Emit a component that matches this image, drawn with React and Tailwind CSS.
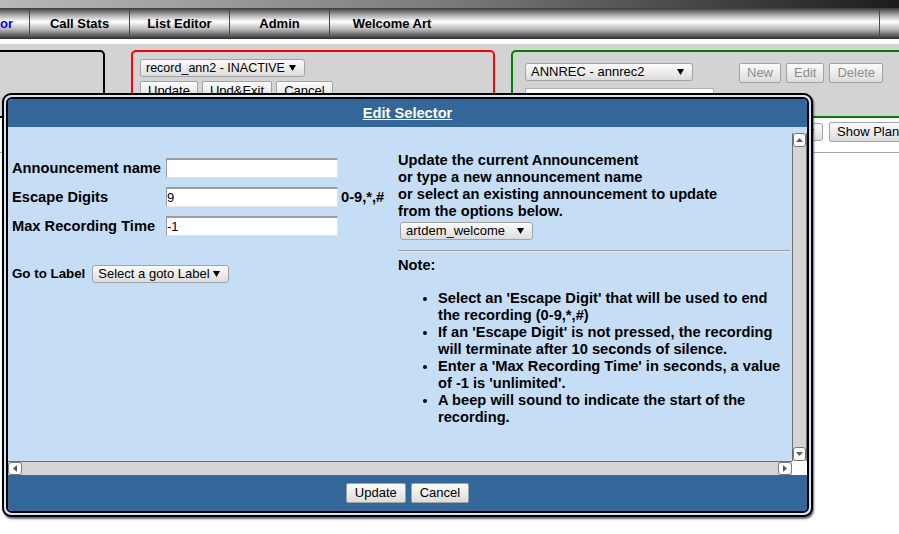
import React from 'react'

const GRAD = 'bg-[linear-gradient(#fcfcfc,#dcdcdc)]'

function Arrow() {
    return (
        <svg width="7" height="6" viewBox="0 0 7 6" className="shrink-0">
            <path d="M0 0h7L3.5 6z" fill="#000" />
        </svg>
    )
}

function FakeSelect({ label, width, size = 'text-[13px]' }) {
    return (
        <div className={`flex items-center justify-between h-[18px] pl-[5px] pr-[8px] border border-[#a3a3a3] rounded-[3px] ${GRAD} ${size} font-normal text-black leading-[16px] ${width}`}>
            <span className="whitespace-nowrap">{label}</span>
            <Arrow />
        </div>
    )
}

function Btn({ children, disabled, className = '' }) {
    return (
        <button
            type="button"
            className={`shrink-0 h-[20px] px-[7px] flex items-center border border-[#a3a3a3] rounded-[2px] ${GRAD} text-[13px] leading-[16px] whitespace-nowrap ${disabled ? 'text-[#8c8c8c]' : 'text-black'} ${className}`}
        >
            {children}
        </button>
    )
}

function Field({ value }) {
    return (
        <input
            readOnly
            value={value}
            className="w-[172px] h-[20px] shrink-0 bg-white border-solid border-t-2 border-l border-r border-b border-t-[#9c9c9c] border-l-[#9c9c9c] border-r-[#e2e2e2] border-b-[#e2e2e2] px-0 text-[13px] font-normal text-black outline-none"
        />
    )
}

function Row({ label, value, extra }) {
    return (
        <div className="flex items-center h-[20px]">
            <div className="w-[154px] shrink-0 whitespace-nowrap">{label}</div>
            <Field value={value} />
            {extra && <div className="ml-[3px] whitespace-nowrap">{extra}</div>}
        </div>
    )
}

function ScrollBox({ dir, className = '' }) {
    const paths = {
        up: 'M0 4L3.5 0L7 4z',
        down: 'M0 0h7L3.5 4z',
        left: 'M4 0v7L0 3.5z',
        right: 'M0 0v7L4 3.5z',
    }
    const vertical = dir === 'up' || dir === 'down'
    return (
        <div className={`bg-white border border-[#777] rounded-[3px] flex items-center justify-center ${className}`}>
            <svg width={vertical ? 7 : 4} height={vertical ? 4 : 7} viewBox={vertical ? '0 0 7 4' : '0 0 4 7'}>
                <path d={paths[dir]} fill="#5a5a5a" />
            </svg>
        </div>
    )
}

const NOTES = [
    "Select an 'Escape Digit' that will be used to end the recording (0-9,*,#)",
    "If an 'Escape Digit' is not pressed, the recording will terminate after 10 seconds of silence.",
    "Enter a 'Max Recording Time' in seconds, a value of -1 is 'unlimited'.",
    'A beep will sound to indicate the start of the recording.',
]

export default function App() {
    return (
        <div className="relative w-[899px] h-[534px] overflow-hidden bg-white font-['Liberation_Sans',Arial,sans-serif] text-black">
            {/* top strip + nav */}
            <div className="h-[8px] bg-[linear-gradient(to_right,#b9b9b9,#7a7a7a_50%,#1c1c1c)]" />
            <div className="flex h-[31px] bg-[linear-gradient(#3a3a3a_0%,#a8a8a8_22%,#ffffff_44%,#b4b4b4_70%,#2a2a2a_100%)] text-[13px] font-bold">
                <div className="w-[30px] shrink-0 overflow-hidden flex justify-end items-center pr-[16px] border-r border-[#4a4a4a] text-[#0000ff]">
                    <span className="shrink-0 whitespace-nowrap">Selector</span>
                </div>
                <div className="w-[100px] shrink-0 flex items-center justify-center border-r border-[#4a4a4a]">Call Stats</div>
                <div className="w-[100px] shrink-0 flex items-center justify-center border-r border-[#4a4a4a]">List Editor</div>
                <div className="w-[100px] shrink-0 flex items-center justify-center border-r border-[#4a4a4a]">Admin</div>
                <div className="w-[124px] shrink-0 flex items-center justify-center">Welcome Art</div>
                <div className="w-[426px] shrink-0 border-r border-[#4a4a4a]" />
            </div>
            <div className="h-[5px]" />

            {/* panels */}
            <div className="h-[74px] bg-[#d3d3d3] flex pt-[6px]">
                <div className="ml-[-20px] w-[125px] shrink-0 border-2 border-black rounded-tr-[5px]" />
                <div className="ml-[26px] w-[364px] shrink-0 border-2 border-[#ff0000] rounded-t-[5px] pl-[7px] pt-[7px] flex flex-col gap-[4px]">
                    <FakeSelect label="record_ann2 - INACTIVE" width="w-[165px]" size="text-[12.5px]" />
                    <div className="flex gap-[4px]">
                        <Btn>Update</Btn>
                        <Btn>Upd&amp;Exit</Btn>
                        <Btn>Cancel</Btn>
                    </div>
                </div>
                <div className="ml-[16px] w-[420px] shrink-0 border-2 border-[#008000] rounded-tl-[5px] pl-[12px] pt-[11px]">
                    <div className="flex items-start">
                        <div className="flex flex-col gap-[7px]">
                            <FakeSelect label="ANNREC - annrec2" width="w-[168px]" />
                            <div className="w-[189px] h-[20px] bg-white border border-[#b0b0b0]" />
                        </div>
                        <div className="ml-[25px] flex gap-[5px]">
                            <Btn disabled>New</Btn>
                            <Btn disabled>Edit</Btn>
                            <Btn disabled>Delete</Btn>
                        </div>
                    </div>
                </div>
            </div>

            {/* toolbar below panels */}
            <div className="h-[35px] border-b border-[#a8a8a8] flex items-start pt-[4px] pl-[703px]">
                <div className="mt-[1px]">
                    <FakeSelect label="Plan" width="w-[120px]" />
                </div>
                <Btn className="ml-[6px]">Show Plan</Btn>
            </div>

            {/* modal */}
            <div className="absolute left-[2px] top-[93px] w-[811px] h-[424px] border-2 border-black rounded-[9px] p-[2px] bg-[#d2e4f7] shadow-[1px_2px_2px_rgba(0,0,0,0.6)]">
                <div className="h-full border-2 border-black rounded-[6px] overflow-hidden flex flex-col">
                    <div className="h-[28px] shrink-0 bg-[#336699] flex items-center justify-center text-white font-bold underline text-[14.67px]">
                        Edit Selector
                    </div>
                    <div className="h-[348px] shrink-0 bg-[#c6def5] pt-[6px] flex flex-col">
                        <div className="flex h-[328px]">
                            <div className="flex-1 flex items-start pt-[19px] text-[14.67px] font-bold">
                                <div className="w-[390px] shrink-0 pl-[4px] pt-[6px] flex flex-col gap-[9px]">
                                    <Row label="Announcement name" value="" />
                                    <Row label="Escape Digits" value="9" extra="0-9,*,#" />
                                    <Row label="Max Recording Time" value="-1" />
                                    <div className="mt-[20px] flex items-center h-[18px]">
                                        <span className="text-[13.33px] whitespace-nowrap">Go to Label</span>
                                        <div className="ml-[7px]">
                                            <FakeSelect label="Select a goto Label" width="w-[137px]" />
                                        </div>
                                    </div>
                                </div>
                                <div className="w-[392px] shrink-0 leading-[17px]">
                                    <div>
                                        Update the current Announcement<br />
                                        or type a new announcement name<br />
                                        or select an existing announcement to update<br />
                                        from the options below.
                                    </div>
                                    <div className="mt-[2px] ml-[2px]">
                                        <FakeSelect label="artdem_welcome" width="w-[133px]" />
                                    </div>
                                    <div className="mt-[10px] border-t border-[#9a9a9a] border-b border-b-[#e4eef9]" />
                                    <div className="mt-[5px]">Note:</div>
                                    <ul className="list-disc pl-[40px] mt-[16px]">
                                        {NOTES.map((n) => (
                                            <li key={n}>{n}</li>
                                        ))}
                                    </ul>
                                </div>
                            </div>
                            <div className="w-[15px] shrink-0 bg-[#d4d4d4] border-x border-[#6e6e6e] flex flex-col justify-between">
                                <ScrollBox dir="up" className="h-[14px]" />
                                <ScrollBox dir="down" className="h-[14px]" />
                            </div>
                        </div>
                        <div className="flex h-[14px]">
                            <div className="flex-1 bg-[#d4d4d4] border-t border-[#6e6e6e] flex justify-between">
                                <ScrollBox dir="left" className="w-[14px]" />
                                <ScrollBox dir="right" className="w-[14px]" />
                            </div>
                            <div className="w-[15px] bg-white" />
                        </div>
                    </div>
                    <div className="flex-1 bg-[#336699] flex justify-center items-start pt-[8px] gap-[5px]">
                        <Btn className="px-[8px] border-[#8a8a8a]">Update</Btn>
                        <Btn className="px-[8px] border-[#8a8a8a]">Cancel</Btn>
                    </div>
                </div>
            </div>
        </div>
    )
}
